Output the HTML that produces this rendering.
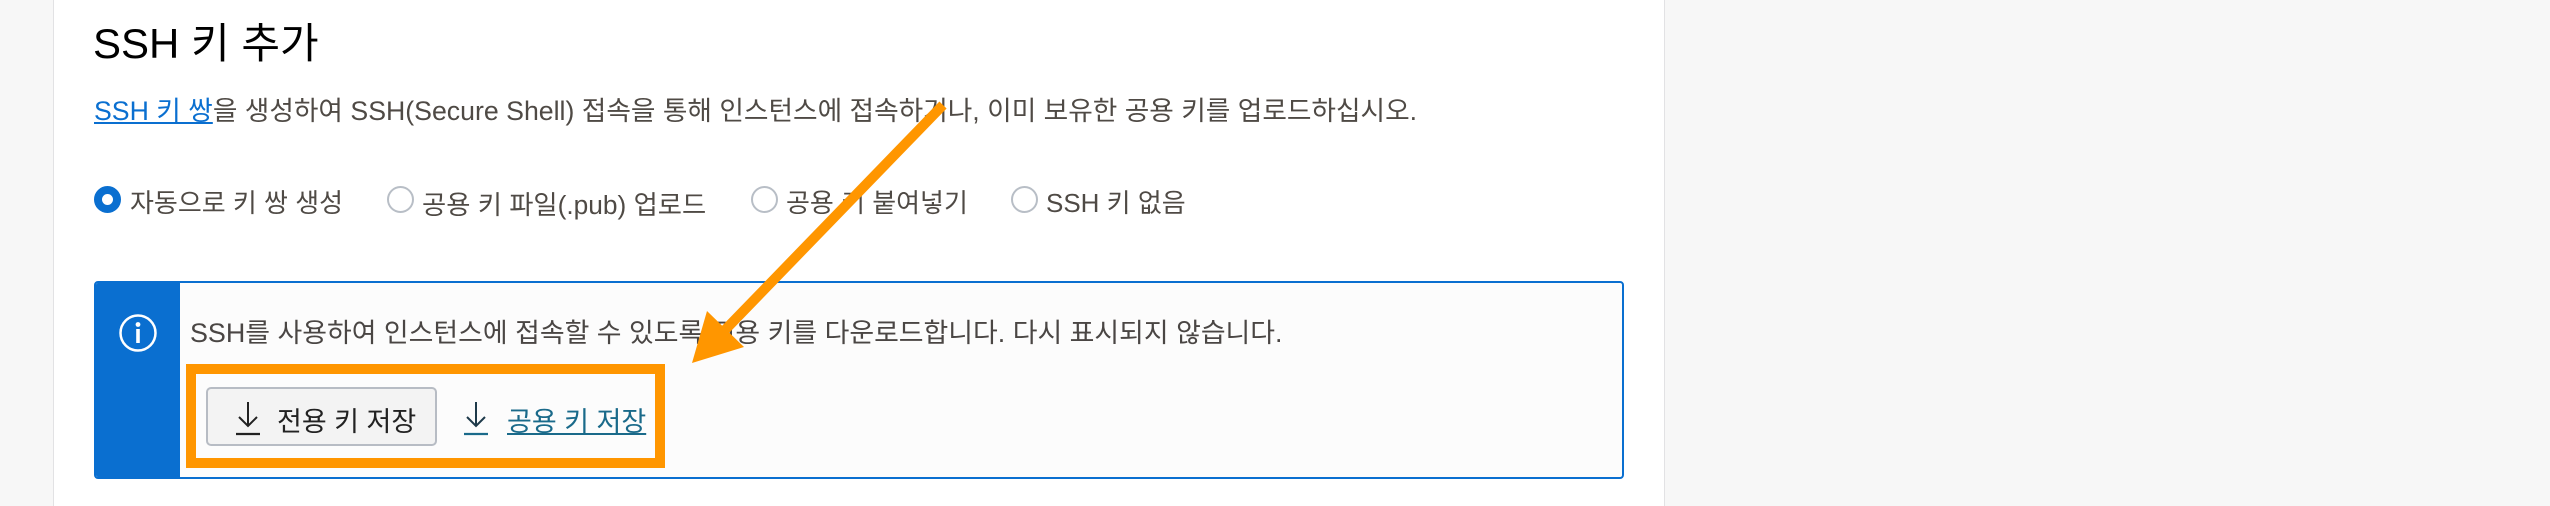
<!DOCTYPE html>
<html><head><meta charset="utf-8"><style>
*{margin:0;padding:0;box-sizing:border-box}
body{width:2550px;height:506px;background:#f7f7f7;position:relative;overflow:hidden;font-family:"Liberation Sans","Noto Sans CJK KR",sans-serif}
.card{position:absolute;left:53px;top:0;width:1612px;height:506px;background:#fff;border-left:1px solid #e2e2e4;border-right:1px solid #e2e2e4}
.t{position:absolute;white-space:nowrap}
.radio{position:absolute;top:186px;width:27px;height:27px;border-radius:50%;border:2px solid #b8bec6;background:#fff}
.radio.on{border:8px solid #0a6fd0}
.lbl{position:absolute;top:183px;font-size:26px;color:#4f4a45;white-space:nowrap}
</style></head><body>
<div class="card"></div>
<div class="t" style="left:93px;top:10px;font-size:42px;color:#000">SSH 키 추가</div>
<div class="t" style="left:94px;top:89px;font-size:26.7px;color:#4f4a45"><span style="color:#0a6fd0;text-decoration:underline">SSH 키 쌍</span>을 생성하여 SSH(Secure Shell) 접속을 통해 인스턴스에 접속하거나, 이미 보유한 공용 키를 업로드하십시오.</div>
<div class="radio on" style="left:94px"></div><div class="lbl" style="left:130px">자동으로 키 쌍 생성</div>
<div class="radio" style="left:387px"></div><div class="lbl" style="left:422px;font-size:26.3px">공용 키 파일(.pub) 업로드</div>
<div class="radio" style="left:751px"></div><div class="lbl" style="left:786px">공용 키 붙여넣기</div>
<div class="radio" style="left:1011px"></div><div class="lbl" style="left:1046px">SSH 키 없음</div>
<div style="position:absolute;left:94px;top:281px;width:1530px;height:198px;border:2px solid #0a6fd0;border-radius:4px;background:#fcfcfc;overflow:hidden">
 <div style="position:absolute;left:0;top:0;width:84px;height:100%;background:#0a6fd0"></div>
 <svg style="position:absolute;left:22px;top:30px" width="40" height="40" viewBox="0 0 40 40"><circle cx="20" cy="20" r="17.5" fill="none" stroke="#fff" stroke-width="2.5"/><circle cx="20" cy="11.5" r="2.4" fill="#fff"/><rect x="18.2" y="16" width="3.6" height="14" fill="#fff"/></svg>
</div>
<div class="t" style="left:190px;top:311px;font-size:26.9px;color:#4a4644">SSH를 사용하여 인스턴스에 접속할 수 있도록 전용 키를 다운로드합니다. 다시 표시되지 않습니다.</div>
<div style="position:absolute;left:186px;top:364px;width:479px;height:104px;border:10px solid #ff9600"></div>
<div style="position:absolute;left:206px;top:387px;width:231px;height:59px;background:#f3f3f3;border:2px solid #b7bcc4;border-radius:5px"></div>
<svg style="position:absolute;left:234px;top:400px" width="28" height="36" viewBox="0 0 28 36"><path d="M14 2V26M5 17L14 26L23 17" fill="none" stroke="#222" stroke-width="2"/><path d="M2 34H26" stroke="#222" stroke-width="2.2"/></svg>
<div class="t" style="left:277px;top:400px;font-size:27px;color:#222">전용 키 저장</div>
<svg style="position:absolute;left:462px;top:400px" width="28" height="36" viewBox="0 0 28 36"><path d="M14 2V26M5 17L14 26L23 17" fill="none" stroke="#1e3a4a" stroke-width="2"/><path d="M2 34H26" stroke="#1a6a8a" stroke-width="2.2"/></svg>
<div class="t" style="left:507px;top:400px;font-size:27px;color:#1a6a8a;text-decoration:underline">공용 키 저장</div>
<svg style="position:absolute;left:0;top:0" width="2550" height="506"><line x1="943" y1="105" x2="724" y2="331" stroke="#ff9600" stroke-width="10"/><polygon points="692,363 707,311 744,347" fill="#ff9600"/></svg>
</body></html>
